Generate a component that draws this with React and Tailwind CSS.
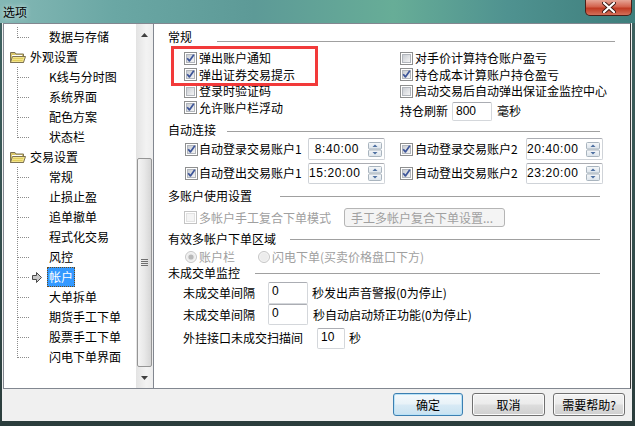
import React from "react";

function Check({ checked = false, disabled = false }) {
  return (
    <svg width="13" height="13" viewBox="0 0 13 13" className="shrink-0 block">
      <defs>
        <linearGradient id="cbg" x1="0" y1="0" x2="1" y2="1">
          <stop offset="0" stopColor="#c6cad0" />
          <stop offset="1" stopColor="#f7f7f7" />
        </linearGradient>
      </defs>
      <rect x="0.5" y="0.5" width="12" height="12" fill="#fff" stroke={disabled ? "#c4c4c4" : "#8e8f8f"} />
      <rect x="2.5" y="2.5" width="8" height="8" fill={disabled ? "#f4f4f4" : "url(#cbg)"} stroke={disabled ? "#e2e2e2" : "#b2b6bc"} />
      {checked && (
        <path d="M3.2 6.2 L5.4 8.9 L9.8 2.8" fill="none" stroke="#3d5599" strokeWidth="1.7" strokeLinejoin="round" />
      )}
    </svg>
  );
}

function Radio({ checked = false }) {
  return (
    <svg width="12" height="12" viewBox="0 0 12 12" className="shrink-0 block">
      <circle cx="6" cy="6" r="5.5" fill="#f4f4f4" stroke="#c6c6c6" />
      <circle cx="6" cy="6" r="4" fill="#ececec" />
      {checked && <circle cx="6" cy="6" r="2.6" fill="#b8b8b8" />}
    </svg>
  );
}

function Spin() {
  return (
    <svg width="14" height="15" viewBox="0 0 14 15" className="shrink-0 block">
      <defs>
        <linearGradient id="spg" x1="0" y1="0" x2="0" y2="1">
          <stop offset="0" stopColor="#f6f8fa" />
          <stop offset="1" stopColor="#dbe3ea" />
        </linearGradient>
      </defs>
      <rect x="0.5" y="0.5" width="13" height="6.5" rx="1" fill="url(#spg)" stroke="#a9b4be" />
      <rect x="0.5" y="8" width="13" height="6.5" rx="1" fill="url(#spg)" stroke="#a9b4be" />
      <path d="M4.5 5 L7 2.5 L9.5 5Z" fill="#4d6fa0" />
      <path d="M4.5 10 L7 12.5 L9.5 10Z" fill="#4d6fa0" />
    </svg>
  );
}

function Folder() {
  return (
    <svg width="16" height="13" viewBox="0 0 16 13" className="shrink-0 block">
      <path d="M0.5 1.5 L5 1.5 L6 3 L13.5 3 L13.5 11.5 L0.5 11.5Z" fill="#d9c66b" stroke="#7d7355" />
      <rect x="2" y="4" width="10" height="5" fill="#ffffff" />
      <path d="M0.5 11.5 L2.5 5.5 L15.5 5.5 L13.5 11.5Z" fill="#f3e48a" stroke="#7d7355" />
      <path d="M3 7.5 H13 M2.5 9.5 H12.5" stroke="#e0cc5a" />
    </svg>
  );
}

function Connector({ half = false, arrow = false }) {
  return (
    <svg width="45" height="20" viewBox="0 0 45 20" className="shrink-0 block">
      <line x1="13.5" y1="0" x2="13.5" y2={half ? 11 : 20} stroke="#8c8c8c" strokeDasharray="1 1" />
      <line x1="14" y1="10.5" x2="25" y2="10.5" stroke="#8c8c8c" strokeDasharray="1 1" />
      {arrow && (
        <path
          d="M28.5 8.5 H32.5 V5.5 L37.5 10.5 L32.5 15.5 V12.5 H28.5Z"
          fill="#c8c8c8"
          stroke="#4a4a4a"
          strokeLinejoin="round"
        />
      )}
    </svg>
  );
}

const treeRows = [
  { t: "数据与存储", k: "c", half: true },
  { t: "外观设置", k: "f" },
  { t: "K线与分时图", k: "c" },
  { t: "系统界面", k: "c" },
  { t: "配色方案", k: "c" },
  { t: "状态栏", k: "c", half: true },
  { t: "交易设置", k: "f" },
  { t: "常规", k: "c" },
  { t: "止损止盈", k: "c" },
  { t: "追单撤单", k: "c" },
  { t: "程式化交易", k: "c" },
  { t: "风控", k: "c" },
  { t: "帐户", k: "c", sel: true },
  { t: "大单拆单", k: "c" },
  { t: "期货手工下单", k: "c" },
  { t: "股票手工下单", k: "c" },
  { t: "闪电下单界面", k: "c", half: true },
];

function TreeRow({ r }) {
  if (r.k === "f") {
    return (
      <div className="h-[20px] flex items-center">
        <div className="ml-[6px]">
          <Folder />
        </div>
        <span className="ml-[4px] whitespace-nowrap">{r.t}</span>
      </div>
    );
  }
  return (
    <div className="h-[20px] flex items-center">
      <Connector half={r.half} arrow={r.sel} />
      {r.sel ? (
        <span className="-ml-[2px] h-[20px] px-[1px] flex items-center bg-[#3399ff] text-white border border-dotted border-[#6b4a1a] whitespace-nowrap">
          {r.t}
        </span>
      ) : (
        <span className="whitespace-nowrap">{r.t}</span>
      )}
    </div>
  );
}

function Tree() {
  return (
    <div className="ml-[1px] w-[150px] h-full flex border-l border-t border-b border-[#828790] bg-white">
      <div className="flex-1 pt-[3px] overflow-hidden">
        {treeRows.map((r, i) => (
          <TreeRow key={i} r={r} />
        ))}
      </div>
      <div className="w-[17px] flex flex-col bg-[linear-gradient(90deg,#e3e3e3,#f3f3f3_60%,#ededed)]">
        <div className="h-[21px] flex items-center justify-center">
          <svg width="7" height="4" viewBox="0 0 7 4">
            <path d="M0 4 L3.5 0 L7 4Z" fill="#404040" />
          </svg>
        </div>
        <div className="h-[113px]" />
        <div className="h-[209px] ml-[1px] w-[15px] rounded-[2px] border border-[#959595] bg-[linear-gradient(90deg,#f4f4f4,#e8e8e8_50%,#d6d6d6)] flex items-center justify-center">
          <div className="flex flex-col gap-[1px]">
            <div className="w-[7px] h-px bg-[#6f6f6f]" />
            <div className="w-[7px] h-px bg-[#6f6f6f]" />
            <div className="w-[7px] h-px bg-[#6f6f6f]" />
            <div className="w-[7px] h-px bg-[#6f6f6f]" />
          </div>
        </div>
        <div className="h-[21px] flex items-center justify-center">
          <svg width="7" height="4" viewBox="0 0 7 4">
            <path d="M0 0 L3.5 4 L7 0Z" fill="#404040" />
          </svg>
        </div>
      </div>
    </div>
  );
}

function Header({ label, labelW, h, lineCls }) {
  return (
    <div className={`flex items-center pl-[14px] ${h}`}>
      <span className={`${labelW} whitespace-nowrap`}>{label}</span>
      <div className={`flex-1 h-px bg-[#a0a0a0] ${lineCls}`} />
    </div>
  );
}

function CheckRow({ h, checked, label }) {
  return (
    <div className={`${h} flex items-center`}>
      <Check checked={checked} />
      <span className="ml-[2px] whitespace-nowrap">{label}</span>
    </div>
  );
}

function TimeBox({ value, h }) {
  return (
    <div className={`w-[77px] ${h} shrink-0 bg-white border border-[#cfd3d8] border-t-[#abadb3] rounded-[2px] flex items-center`}>
      <div className="w-[50px] text-right font-['Liberation_Sans',sans-serif] text-[12px] tracking-[0.6px]">{value}</div>
      <div className="ml-[9px]">
        <Spin />
      </div>
    </div>
  );
}

function TextBox({ value, cls }) {
  return (
    <div className={`${cls} shrink-0 bg-white border border-[#d4d7db] border-t-[#abadb3] rounded-[2px] pl-[3px] pt-[1px] font-['Liberation_Sans',sans-serif] text-[12px] leading-[14px]`}>
      {value}
    </div>
  );
}

function Panel() {
  return (
    <div className="relative w-[478px] h-full bg-white border border-[#828790] border-r-[#3a3a3a] flex flex-col">
      <Header label="常规" labelW="w-[49px]" h="h-[26px]" lineCls="mt-[8px] mr-[15px]" />
      <div className="flex h-[73px]">
        <div className="w-[246px] pl-[30px] flex flex-col">
          <CheckRow h="h-[16px]" checked label="弹出账户通知" />
          <CheckRow h="h-[17px]" checked label="弹出证券交易提示" />
          <CheckRow h="h-[16px]" label="登录时验证码" />
          <CheckRow h="h-[17px]" checked label="允许账户栏浮动" />
        </div>
        <div className="flex flex-col">
          <CheckRow h="h-[16px]" label="对手价计算持仓账户盈亏" />
          <CheckRow h="h-[17px]" checked label="持仓成本计算账户持仓盈亏" />
          <CheckRow h="h-[16px]" label="启动交易后自动弹出保证金监控中心" />
          <div className="h-[24px] flex items-center">
            <span className="whitespace-nowrap">持仓刷新</span>
            <div className="ml-[4px]">
              <TextBox value="800" cls="w-[40px] h-[19px]" />
            </div>
            <span className="ml-[5px]">毫秒</span>
          </div>
        </div>
      </div>

      <Header label="自动连接" labelW="w-[59px]" h="h-[14px]" lineCls="mt-[2px] mr-[30px]" />
      <div className="h-[24px] flex items-center pl-[31px]">
        <Check checked />
        <span className="ml-[1px] w-[109px] whitespace-nowrap">自动登录交易账户1</span>
        <TimeBox value="8:40:00" h="h-[22px]" />
        <div className="w-[15px]" />
        <Check checked />
        <span className="ml-[2px] w-[111px] whitespace-nowrap">自动登录交易账户2</span>
        <TimeBox value="20:40:00" h="h-[22px]" />
      </div>
      <div className="h-[24px] flex items-center pl-[31px]">
        <Check checked />
        <span className="ml-[1px] w-[109px] whitespace-nowrap">自动登出交易账户1</span>
        <TimeBox value="15:20:00" h="h-[21px]" />
        <div className="w-[15px]" />
        <Check checked />
        <span className="ml-[2px] w-[111px] whitespace-nowrap">自动登出交易账户2</span>
        <TimeBox value="23:20:00" h="h-[21px]" />
      </div>

      <Header label="多账户使用设置" labelW="w-[112px]" h="h-[22px]" lineCls="mr-[30px]" />
      <div className="h-[21px] flex items-center pl-[30px]">
        <Check disabled />
        <span className="ml-[2px] w-[145px] whitespace-nowrap text-[#a0a0a0]">多帐户手工复合下单模式</span>
        <div className="w-[161px] h-[19px] rounded-[3px] border border-[#b5b5b5] bg-[#f4f4f4] text-[#a0a0a0] flex items-center pl-[6px] whitespace-nowrap">
          手工多帐户复合下单设置...
        </div>
      </div>

      <Header label="有效多帐户下单区域" labelW="w-[122px]" h="h-[22px]" lineCls="mr-[30px]" />
      <div className="h-[14px] flex items-center pl-[31px] text-[#a0a0a0]">
        <Radio checked />
        <span className="ml-[2px] w-[59px] whitespace-nowrap">账户栏</span>
        <Radio />
        <span className="ml-[2px] whitespace-nowrap">闪电下单(买卖价格盘口下方)</span>
      </div>

      <Header label="未成交单监控" labelW="w-[87px]" h="h-[18px]" lineCls="mr-[30px]" />
      <div className="h-[22px] flex items-center pl-[29px]">
        <span className="w-[85px] whitespace-nowrap">未成交单间隔</span>
        <TextBox value="0" cls="w-[40px] h-[22px]" />
        <span className="ml-[4px] whitespace-nowrap">秒发出声音警报(0为停止)</span>
      </div>
      <div className="h-[21px] flex items-center pl-[29px]">
        <span className="w-[85px] whitespace-nowrap">未成交单间隔</span>
        <TextBox value="0" cls="w-[40px] h-[21px]" />
        <span className="ml-[5px] whitespace-nowrap">秒自动启动矫正功能(0为停止)</span>
      </div>
      <div className="h-[26px] flex items-center pl-[29px]">
        <span className="w-[134px] whitespace-nowrap">外挂接口未成交扫描间</span>
        <TextBox value="10" cls="w-[28px] h-[21px]" />
        <span className="ml-[4px] whitespace-nowrap">秒</span>
      </div>

      <div className="absolute left-[17px] top-[22px] w-[147px] h-[40px] border-[3px] border-[#f23a3a]" />
    </div>
  );
}

function Btn({ children, cls, def }) {
  return (
    <div
      className={`${cls} h-[23px] rounded-[3px] border flex items-center justify-center ${
        def
          ? "border-[#3c7fb1] shadow-[inset_0_0_0_1px_#b9e2f7] bg-[linear-gradient(180deg,#f4f9fc_0%,#e8f2f8_48%,#d8eaf5_52%,#c9e2f1_100%)]"
          : "border-[#707070] shadow-[inset_0_0_0_1px_#fbfbfb] bg-[linear-gradient(180deg,#f3f3f3_0%,#ebebeb_48%,#dddddd_52%,#cfcfcf_100%)]"
      }`}
    >
      {children}
    </div>
  );
}

export default function App() {
  return (
    <div className="w-[635px] h-[426px] flex flex-col overflow-hidden bg-[linear-gradient(180deg,#3f6462,#2b3d3c)] font-['Noto_Sans_CJK_SC',sans-serif] text-[12px] leading-[14px] text-black">
      <div className="h-[23px] flex items-start justify-between bg-[linear-gradient(90deg,#84b8b5_0%,#6aa7a4_18%,#5d9a97_40%,#67ad97_62%,#4f9290_80%,#3e7e7c_100%)]">
        <div className="pl-[3px] pt-[5px] [text-shadow:0_0_5px_rgba(255,255,255,0.9)]">选项</div>
        <div className="mr-[3px] w-[47px] h-[16px] rounded-b-[5px] border border-t-0 border-[#4a1f18] bg-[linear-gradient(180deg,#e6a596_0%,#d3624d_45%,#c03a22_55%,#d3705a_100%)] flex items-center justify-center">
          <svg width="14" height="11" viewBox="0 0 14 11">
            <path d="M2 1 L12 10 M12 1 L2 10" stroke="#3a1a14" strokeWidth="4" strokeLinecap="round" />
            <path d="M2 1 L12 10 M12 1 L2 10" stroke="#ffffff" strokeWidth="2.2" strokeLinecap="round" />
          </svg>
        </div>
      </div>
      <div className="h-[398px] ml-[2px] mr-[3px] bg-[#f0f0f0] flex flex-col">
        <div className="h-[366px] flex">
          <Tree />
          <Panel />
        </div>
        <div className="h-[32px] pt-[4px] pr-[7px] flex justify-end">
          <Btn cls="w-[70px]" def>
            确定
          </Btn>
          <div className="w-[9px]" />
          <Btn cls="w-[73px]">取消</Btn>
          <div className="w-[8px]" />
          <Btn cls="w-[72px]">需要帮助?</Btn>
        </div>
      </div>
    </div>
  );
}
